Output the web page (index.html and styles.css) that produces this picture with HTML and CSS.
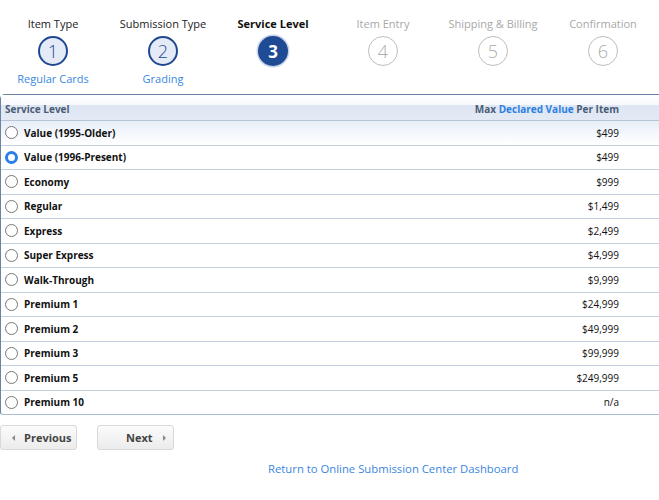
FILE: index.html
```html
<!DOCTYPE html>
<html>
<head>
<meta charset="utf-8">
<link rel="stylesheet" href="styles.css">
</head>
<body>
<div class="stepper">
  <div class="step done"><div class="step-label">Item Type</div><div class="circle">1</div><div class="sub">Regular Cards</div></div>
  <div class="step done"><div class="step-label">Submission Type</div><div class="circle">2</div><div class="sub">Grading</div></div>
  <div class="step current"><div class="step-label">Service Level</div><div class="circle">3</div><div class="sub"></div></div>
  <div class="step todo"><div class="step-label">Item Entry</div><div class="circle">4</div><div class="sub"></div></div>
  <div class="step todo"><div class="step-label">Shipping &amp; Billing</div><div class="circle">5</div><div class="sub"></div></div>
  <div class="step todo"><div class="step-label">Confirmation</div><div class="circle">6</div><div class="sub"></div></div>
</div>

<div class="table">
  <div class="row head">
    <div class="c-name">Service Level</div>
    <div class="c-val">Max <span class="blue">Declared Value</span> Per Item</div>
  </div>
  <div class="row first"><div class="c-name"><span class="radio"></span>Value (1995-Older)</div><div class="c-val">$499</div></div>
  <div class="row"><div class="c-name"><span class="radio on"></span>Value (1996-Present)</div><div class="c-val">$499</div></div>
  <div class="row"><div class="c-name"><span class="radio"></span>Economy</div><div class="c-val">$999</div></div>
  <div class="row"><div class="c-name"><span class="radio"></span>Regular</div><div class="c-val">$1,499</div></div>
  <div class="row"><div class="c-name"><span class="radio"></span>Express</div><div class="c-val">$2,499</div></div>
  <div class="row"><div class="c-name"><span class="radio"></span>Super Express</div><div class="c-val">$4,999</div></div>
  <div class="row"><div class="c-name"><span class="radio"></span>Walk-Through</div><div class="c-val">$9,999</div></div>
  <div class="row"><div class="c-name"><span class="radio"></span>Premium 1</div><div class="c-val">$24,999</div></div>
  <div class="row"><div class="c-name"><span class="radio"></span>Premium 2</div><div class="c-val">$49,999</div></div>
  <div class="row"><div class="c-name"><span class="radio"></span>Premium 3</div><div class="c-val">$99,999</div></div>
  <div class="row"><div class="c-name"><span class="radio"></span>Premium 5</div><div class="c-val">$249,999</div></div>
  <div class="row last"><div class="c-name"><span class="radio"></span>Premium 10</div><div class="c-val">n/a</div></div>
</div>

<div class="buttons">
  <button class="btn prev"><span class="arr-l"></span>Previous</button>
  <button class="btn next">Next<span class="arr-r"></span></button>
</div>

<div class="footer"><a class="link" href="#">Return to Online Submission Center Dashboard</a></div>
</body>
</html>
```

FILE: styles.css
```css
html, body {
  margin: 0;
  padding: 0;
  background: #fff;
  font-family: "Open Sans", "Liberation Sans", sans-serif;
  color: #222;
}

.stepper {
  display: grid;
  grid-template-columns: repeat(6, 110px);
  margin-left: -2px;
  padding-top: 16px;
  height: 78px;
}
.step {
  display: flex;
  flex-direction: column;
  align-items: center;
}
.step-label {
  font-size: 11px;
  line-height: 15px;
  height: 15px;
  white-space: nowrap;
}
.circle {
  box-sizing: border-box;
  width: 30px;
  height: 30px;
  border-radius: 50%;
  margin-top: 5px;
  display: flex;
  align-items: center;
  justify-content: center;
  font-size: 18px;
  font-weight: 300;
}
.sub {
  margin-top: 6px;
  font-size: 11px;
  line-height: 14px;
  color: #3a88e0;
}
.done .step-label { color: #222; }
.done .circle {
  border: 2px solid #1f4894;
  background: #e4ebf7;
  color: #1f4894;
}
.current .step-label { font-weight: 700; color: #111; }
.current .circle {
  background: #1f4a94;
  color: #fff;
  font-weight: 700;
  font-size: 17px;
  box-shadow: 0 0 0 1.5px #c8d4e8;
}
.todo .step-label { color: #a8a8a8; }
.todo .circle {
  border: 1.5px solid #bdbdbd;
  color: #adadad;
  background: #fff;
}

.table {
  border: 1px solid #6a82a4;
  border-right: none;
  border-bottom-color: #a9bdd2;
  border-top-left-radius: 5px;
  border-bottom-left-radius: 3px;
}
.row {
  display: flex;
  align-items: center;
  justify-content: space-between;
  box-sizing: border-box;
  height: 24.5px;
  border-bottom: 1px solid #c3d0de;
  font-size: 10px;
}
.row.last { border-bottom: none; height: 23.5px; }
.row.head {
  height: 26px;
  border-bottom: 1px solid #b6c6d8;
  background: linear-gradient(#ffffff 0%, #f7f9fc 38%, #dde6f3 42%, #e3eaf5 100%);
  font-weight: 700;
  color: #4b5d76;
  padding-top: 3px;
}
.row.first {
  background: linear-gradient(#e8eef8, #ffffff);
}
.c-name {
  display: flex;
  align-items: center;
  padding-left: 4px;
  font-weight: 700;
  color: #111;
}
.head .c-name { color: #4b5d76; }
.c-val {
  padding-right: 40px;
  color: #111;
}
.head .c-val { color: #4b5d76; }
.blue { color: #2d80e2; }

.radio {
  box-sizing: border-box;
  width: 13px;
  height: 13px;
  border-radius: 50%;
  border: 1px solid #777;
  background: #fff;
  margin-left: 0;
  margin-right: 6px;
}
.radio.on {
  border: 3.5px solid #2b7fe6;
}

.buttons {
  display: flex;
  gap: 20px;
  margin-top: 10px;
}
.btn {
  box-sizing: border-box;
  width: 77px;
  height: 25px;
  border: 1px solid #d8d8d8;
  border-radius: 3px;
  background: linear-gradient(#fbfbfb, #ececec);
  font-family: "Open Sans", "Liberation Sans", sans-serif;
  font-size: 11px;
  font-weight: 700;
  color: #444;
  display: flex;
  align-items: center;
  padding: 0;
}
.prev { padding-left: 11px; }
.next { padding-left: 28px; }
.arr-l {
  width: 0; height: 0;
  border-top: 3px solid transparent;
  border-bottom: 3px solid transparent;
  border-right: 3px solid #888;
  margin-right: 9px;
}
.arr-r {
  width: 0; height: 0;
  border-top: 3px solid transparent;
  border-bottom: 3px solid transparent;
  border-left: 3px solid #888;
  margin-left: 10px;
}

.footer {
  margin-top: 6px;
  padding-left: 268px;
}
.link {
  font-size: 11.3px;
  color: #3a86e0;
  text-decoration: none;
}
```
